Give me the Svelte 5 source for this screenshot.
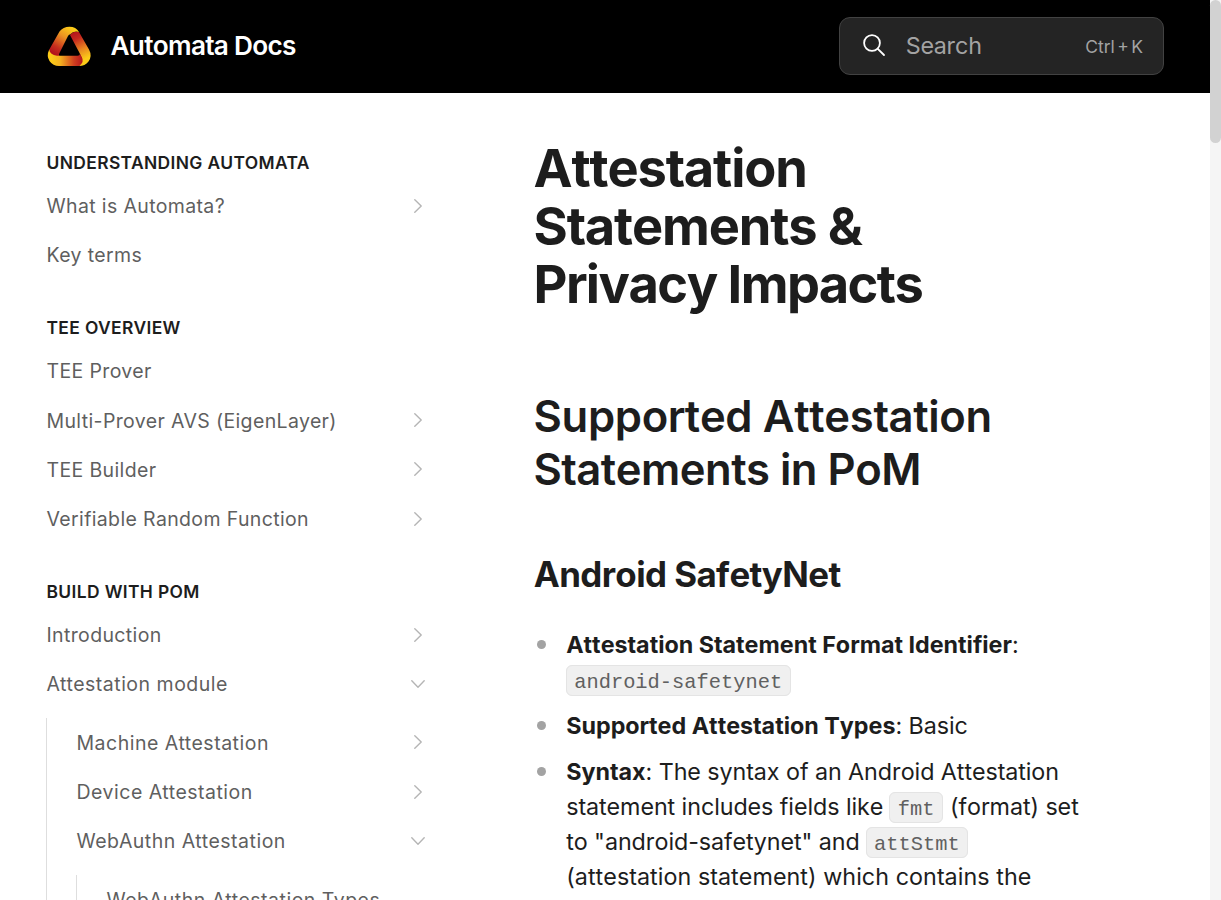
<script>
  const groups = [
    { title: 'Understanding Automata', items: [
      { label: 'What is Automata?', arrow: 'right' }, { label: 'Key terms' }] },
    { title: 'TEE Overview', items: [
      { label: 'TEE Prover' }, { label: 'Multi-Prover AVS (EigenLayer)', arrow: 'right' },
      { label: 'TEE Builder', arrow: 'right' }, { label: 'Verifiable Random Function', arrow: 'right' }] },
    { title: 'Build with PoM', items: [
      { label: 'Introduction', arrow: 'right' },
      { label: 'Attestation module', arrow: 'down', children: [
        { label: 'Machine Attestation', arrow: 'right' },
        { label: 'Device Attestation', arrow: 'right' },
        { label: 'WebAuthn Attestation', arrow: 'down', children: [
          { label: 'WebAuthn Attestation Types' }] }] }] }
  ];
</script>

{#snippet row(item)}
  <li>
    <a class="row" class:wide={item.label.includes('Attestation')}><span>{item.label}</span>
      {#if item.arrow}
        <svg class:down={item.arrow === 'down'} width="14" height="14" viewBox="0 0 14 14"><path d="M3.8 .8 10.2 7 3.8 13.2" /></svg>
      {/if}
    </a>
    {#if item.children}
      <ul class="nested">{#each item.children as child}{@render row(child)}{/each}</ul>
    {/if}
  </li>
{/snippet}

<div class="page">
  <header>
    <svg class="logo" width="50" height="50" viewBox="0 0 50 50">
      <defs>
        <linearGradient id="left" gradientUnits="userSpaceOnUse" x1="11" y1="34" x2="27" y2="8"><stop offset="0" stop-color="#b3141c" /><stop offset=".22" stop-color="#c62e1e" /><stop offset=".65" stop-color="#ec9522" /><stop offset="1" stop-color="#fccb18" /></linearGradient>
        <linearGradient id="right" gradientUnits="userSpaceOnUse" x1="30" y1="12" x2="43" y2="38"><stop offset="0" stop-color="#b3141c" /><stop offset=".25" stop-color="#c4271e" /><stop offset=".65" stop-color="#e88621" /><stop offset="1" stop-color="#fccb18" /></linearGradient>
        <linearGradient id="base" gradientUnits="userSpaceOnUse" x1="7" y1="40" x2="39" y2="40"><stop offset="0" stop-color="#fccb18" /><stop offset=".3" stop-color="#f3ae20" /><stop offset=".72" stop-color="#cf3e1f" /><stop offset="1" stop-color="#b3141c" /></linearGradient>
      </defs>
      <path fill="url(#right)" d="M26 15 Q29 10.5 35 12 L45 29.5 Q48.5 36 44.5 41.5 Q41 46 35 46 Q38.5 42 37.5 37.5 L35.8 33.5 L26.8 16.5 Z" />
      <path fill="url(#left)" d="M5 30 L15.5 11.5 Q19 6.7 25.5 6.7 Q32 6.7 35 12 Q29.5 10.5 26 14.5 Q25 14 24 16 L15.5 33 Q14.3 35 15.5 36 H8 Q5 33 5 30 Z" />
      <path fill="url(#base)" d="M5.2 29.5 Q2.2 36 5.5 41 Q9 46 15 46 H35 Q41 42 37.2 36 L35.8 33.5 Q36 35.7 33.5 35.7 H13 Q6 35 5.2 29.5 Z" />
    </svg>
    <b class="brand">Automata Docs</b>
    <div class="search">
      <svg width="24" height="24" viewBox="0 0 24 24"><circle cx="10" cy="10" r="7.9" /><path d="m15.8 15.8 6.2 6.2" /></svg>
      <span>Search</span><kbd>Ctrl + K</kbd>
    </div>
  </header>
  <nav>
    {#each groups as group}
      <section><h4>{group.title}</h4><ul>{#each group.items as item}{@render row(item)}{/each}</ul></section>
    {/each}
  </nav>
  <main>
    <h1>Attestation Statements &amp; <span>Privacy Impacts</span></h1>
    <h2>Supported Attestation <span>Statements in PoM</span></h2>
    <h3>Android SafetyNet</h3>
    <ul class="facts">
      <li><b>Attestation Statement Format Identifier</b>: <code>android-safetynet</code></li>
      <li><b>Supported Attestation Types</b>: Basic</li>
      <li><b>Syntax</b>: The syntax of an Android Attestation statement includes fields like <code>fmt</code> (format) set to "android-safetynet" and <code>attStmt</code> <span>(attestation statement) which contains the</span></li>
    </ul>
  </main>
  <div class="scroll"><i></i></div>
</div>

<style>
  :global(body) { margin: 0; overflow: hidden; }
  * { box-sizing: border-box; }
  .page { width: 1221px; height: 900px; overflow: hidden; display: grid; grid-template: 93px 807px / 534px 676px 11px; font-family: Inter, sans-serif; font-kerning: none; color: #1d1d1d; background: #fff; }
  header { grid-column: 1 / 3; background: #000; display: flex; align-items: center; padding: 0 46px 0 44px; }
  .logo { flex: none; margin-top: -3px; }
  .brand { color: #fff; font-size: 26.2px; font-weight: 600; letter-spacing: -.69px; margin-left: 16.5px; margin-top: -2px; }
  .search { width: 325px; height: 58px; margin: -1px 0 0 auto; border: 1.5px solid #424242; border-radius: 11px; background: #242424; display: flex; align-items: center; padding: 0 20px 0 22px; color: #a3a3a3; font-size: 23.3px; }
  .search svg { fill: none; stroke: #fff; stroke-width: 1.8; stroke-linecap: round; margin: -1.5px 0 0 -.3px; }
  .search span { margin-left: 20px; letter-spacing: -.25px; margin-top: -1px; }
  .search kbd { font: 17.5px Inter, sans-serif; margin-left: auto; word-spacing: -2.5px; }
  ul { list-style: none; padding: 0; margin: 0; }
  nav { padding: 56px 100px 0 46.5px; font-kerning: normal; }
  section { margin-bottom: 35px; }
  h4 { margin: 0; font-size: 17.45px; line-height: 26px; height: 32px; padding-top: 1px; text-transform: uppercase; font-weight: 600; letter-spacing: .36px; }
  .row { display: flex; align-items: center; justify-content: space-between; height: 49.2px; font-size: 19.5px; letter-spacing: .36px; color: #5f5f5f; padding-right: 8.8px; }
  .row.wide { letter-spacing: .5px; }
  .row span { padding-top: .8px; }
  .row svg { fill: none; stroke: #b5b5b5; stroke-width: 1.4; stroke-linecap: round; stroke-linejoin: round; }
  .row svg.down { transform: rotate(90deg); }
  .nested { border-left: 1px solid #dedede; padding-left: 29.5px; margin: 9.3px 0 0 -.5px; }
  main { padding: 46px 120px 0 0; }
  h1 { margin: 0 0 0 -.5px; font-size: 52.4px; line-height: 58.2px; letter-spacing: -1.15px; font-weight: 700; width: 450px; }
  h1 span { letter-spacing: -1.5px; }
  h2 { margin: 76px 0 0 -.5px; font-size: 43.6px; line-height: 53px; font-weight: 600; width: 520px; letter-spacing: -.33px; }
  h2 span { letter-spacing: -.5px; }
  h3 { margin: 55px 0 0 -.3px; font-size: 34.9px; line-height: 46px; font-weight: 700; letter-spacing: -.58px; }
  .facts { margin-top: 30px; font-size: 23.3px; line-height: 35px; letter-spacing: -.07px; }
  .facts span { letter-spacing: .06px; }
  .facts li { padding-left: 32.2px; margin-bottom: 11px; position: relative; }
  .facts li::before { content: ''; position: absolute; left: 2.5px; top: 13px; width: 9px; height: 9px; border-radius: 50%; background: #a3a3a3; }
  .facts b { font-weight: 700; letter-spacing: 0; }
  code { font: 20.4px/27px "Liberation Mono", monospace; letter-spacing: 0; color: #606060; background: #f0f0f0; border: 1.5px solid #e4e4e4; border-radius: 6px; padding: 4.5px 7.5px 2px; position: relative; top: -.2px; left: -.5px; }
  .scroll { grid-column: 3; grid-row: 1 / 3; background: #f5f5f5; }
  .scroll i { display: block; height: 143px; background: #d2d2d2; border-radius: 6px; }
</style>
